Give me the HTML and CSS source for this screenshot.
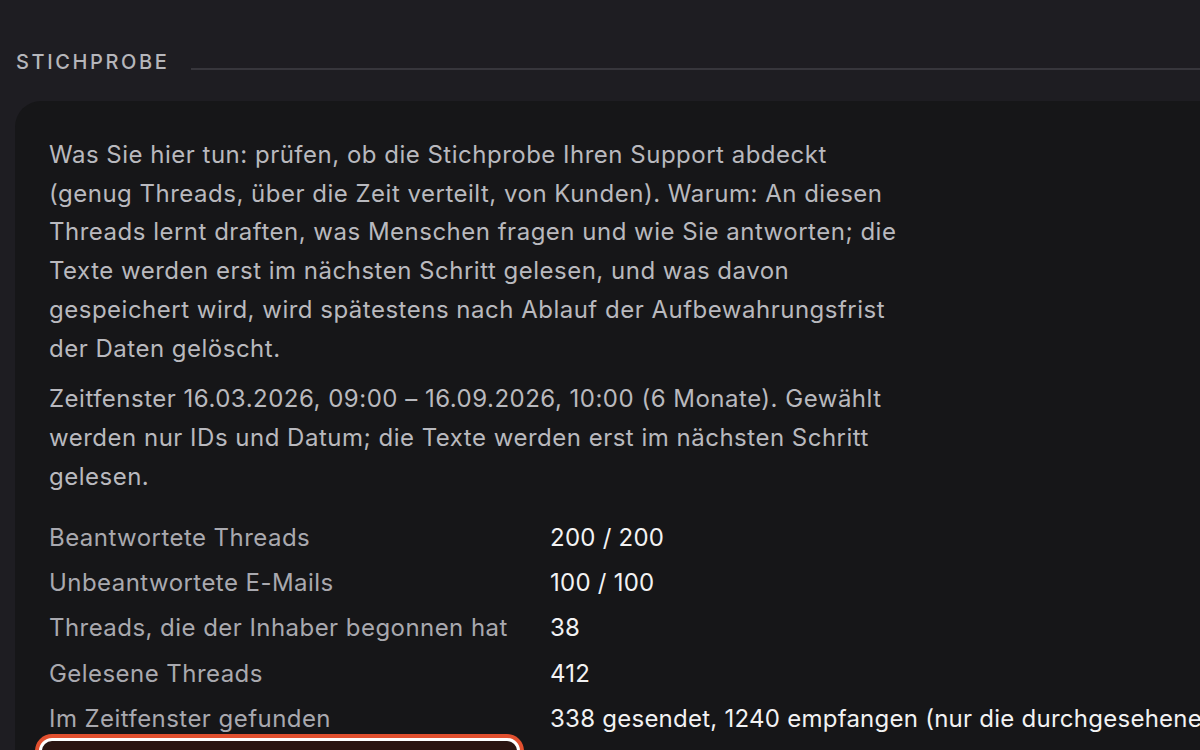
FILE: index.html
```html
<!DOCTYPE html>
<html lang="de">
<head>
<meta charset="utf-8">
<title>Stichprobe</title>
<link rel="stylesheet" href="styles.css">
</head>
<body>
<main class="page">
  <header class="section-head">
    <h2 class="section-title">STICHPROBE</h2>
    <span class="section-rule"></span>
  </header>
  <section class="card">
    <p class="intro">Was Sie hier tun: prüfen, ob die Stichprobe Ihren Support abdeckt (genug Threads, über die Zeit verteilt, von Kunden). Warum: An diesen Threads lernt draften, was Menschen fragen und wie Sie antworten; die Texte werden erst im nächsten Schritt gelesen, und was davon gespeichert wird, wird spätestens nach Ablauf der Aufbewahrungsfrist der Daten gelöscht.</p>
    <p class="intro">Zeitfenster 16.03.2026, 09:00 – 16.09.2026, 10:00 (6 Monate). Gewählt werden nur IDs und Datum; die Texte werden erst im nächsten Schritt gelesen.</p>
    <dl class="stats">
      <div class="stat"><dt>Beantwortete Threads</dt><dd>200 / 200</dd></div>
      <div class="stat"><dt>Unbeantwortete E-Mails</dt><dd>100 / 100</dd></div>
      <div class="stat"><dt>Threads, die der Inhaber begonnen hat</dt><dd>38</dd></div>
      <div class="stat"><dt>Gelesene Threads</dt><dd>412</dd></div>
      <div class="stat"><dt>Im Zeitfenster gefunden</dt><dd>338 gesendet, 1240 empfangen (nur die durchgesehenen Threads)</dd></div>
    </dl>
    <div class="alert"></div>
  </section>
</main>
</body>
</html>
```
FILE: styles.css
```css
html, body {
  margin: 0;
  padding: 0;
  background: #1e1d22;
  overflow: hidden;
  height: 100%;
}
body {
  font-family: Inter, "Noto Sans", sans-serif;
  color: #b9b9be;
}
.page {
  padding: 44px 0 0 15px;
}
.section-head {
  display: flex;
  align-items: center;
  gap: 22px;
  height: 36px;
}
.section-title {
  margin: 0 0 0 1px;
  font-size: 20px;
  font-weight: 500;
  letter-spacing: 2.6px;
  color: #b6b6bb;
  line-height: 36px;
}
.section-rule {
  flex: 1;
  height: 2px;
  background: #37363c;
  margin-top: 14px;
}
.card {
  margin-top: 21px;
  width: 1400px;
  background: #161618;
  border-radius: 26px 0 0 0;
  padding: 35px 34px 40px;
  box-sizing: border-box;
}
.intro {
  margin: 0 0 12px;
  max-width: 852px;
  font-size: 24px;
  letter-spacing: 0.5px;
  line-height: 38.7px;
}
.stats {
  margin: 18px 0 0;
}
.stat {
  display: flex;
  height: 45.4px;
  align-items: center;
  font-size: 24px;
  letter-spacing: 0.45px;
  white-space: nowrap;
}
.stat dt {
  width: 501px;
  color: #a9a9af;
}
.stat dd {
  margin: 0;
  color: #f2f2f3;
  letter-spacing: 0.25px;
}
.alert {
  margin: 0 0 0 -7px;
  width: 475px;
  height: 60px;
  border-radius: 10px;
  background: #2b1512;
  box-shadow: 0 0 0 3px #ffffff, 0 0 0 7px #e2502f;
}
```
